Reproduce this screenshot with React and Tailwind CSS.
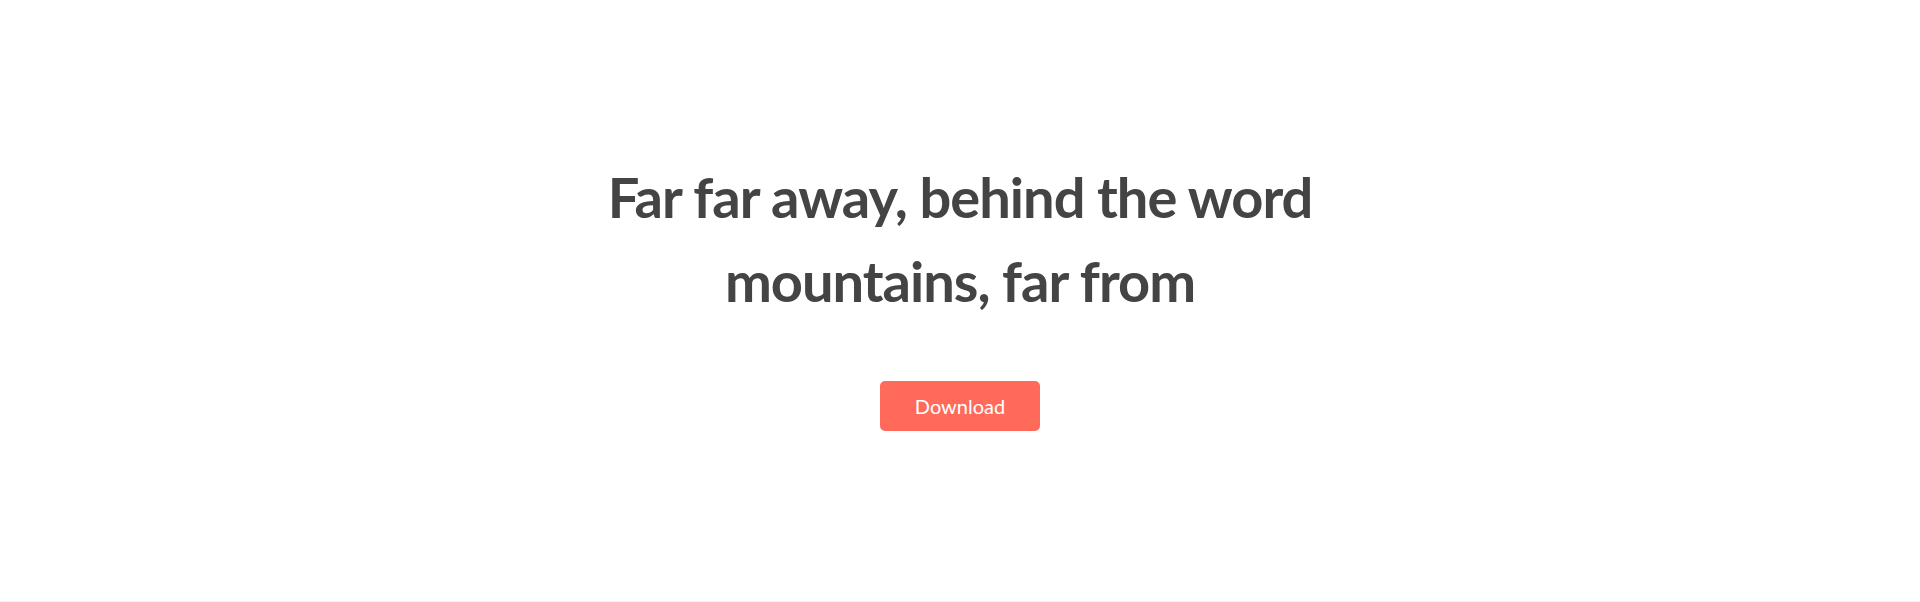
import React from 'react';

const App = () => {
  return (
    <div className="min-h-screen bg-white" style={{ fontFamily: 'Lato, "Noto Sans", sans-serif' }}>
      <section className="h-[602px] border-b border-[#f2f2f2] flex flex-col items-center pt-[155px]">
        <h2 className="w-[760px] text-center text-[56px] leading-[84px] font-bold tracking-[-1px] text-[#444444]">
          Far far away, behind the word mountains, far from
        </h2>
        <button
          type="button"
          className="mt-[58px] w-[160px] h-[50px] rounded-[5px] bg-[#ff6a5b] text-white text-[20px]"
        >
          Download
        </button>
      </section>
    </div>
  );
};

export default App;
